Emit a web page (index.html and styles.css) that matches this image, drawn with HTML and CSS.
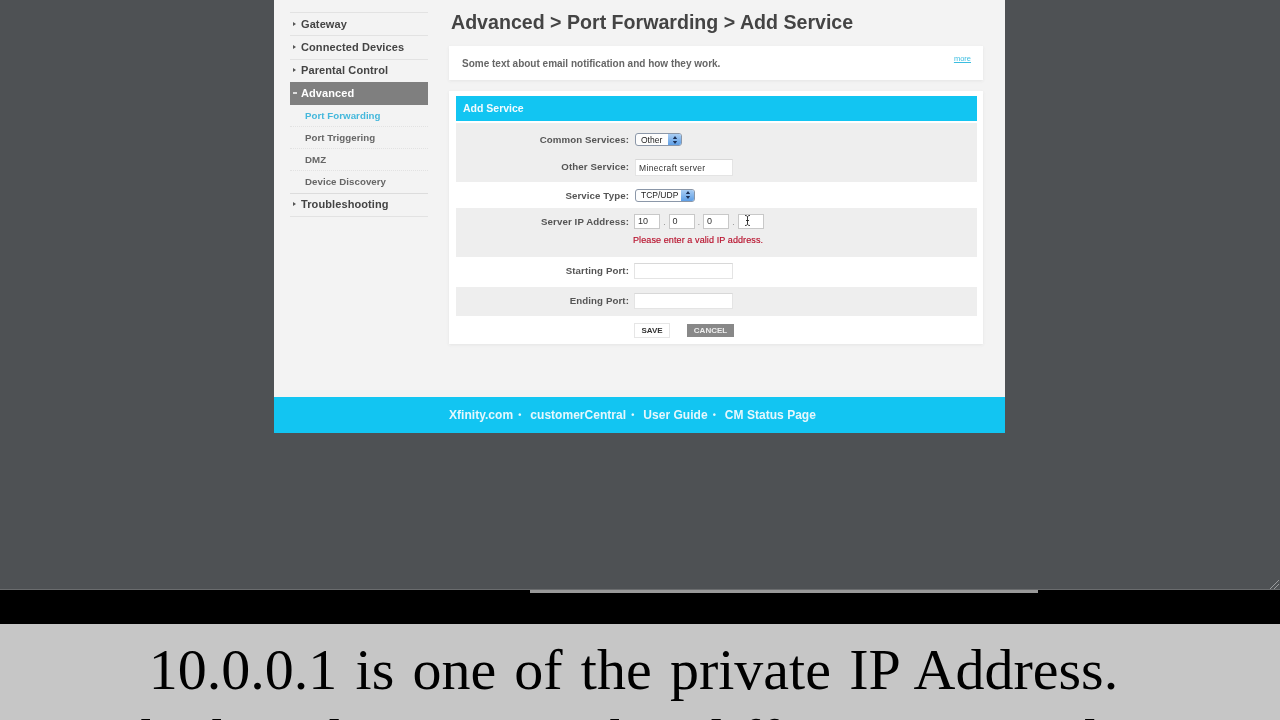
FILE: index.html
```html
<!DOCTYPE html>
<html lang="en">
<head>
<meta charset="utf-8">
<title>Add Service</title>
<link rel="stylesheet" href="styles.css">
</head>
<body>
<div class="screen">
  <div class="desktop">
    <div class="panel">
      <div class="panel-body">
        <nav class="side">
          <a class="nav"><i class="tri"></i>Gateway</a>
          <a class="nav"><i class="tri"></i>Connected Devices</a>
          <a class="nav"><i class="tri"></i>Parental Control</a>
          <a class="nav active"><i class="tri down"></i>Advanced</a>
          <a class="sub current">Port Forwarding</a>
          <a class="sub">Port Triggering</a>
          <a class="sub">DMZ</a>
          <a class="sub">Device Discovery</a>
          <a class="nav trouble"><i class="tri"></i>Troubleshooting</a>
        </nav>
        <main class="main">
          <h1 class="title">Advanced &gt; Port Forwarding &gt; Add Service</h1>
          <div class="info">
            <span>Some text about email notification and how they work.</span>
            <a class="more">more</a>
          </div>
          <section class="card">
            <h2 class="card-head">Add Service</h2>
            <div class="band shade first">
              <div class="row r1">
                <label>Common Services:</label>
                <span class="select s-other">Other<b class="stepper"><svg viewBox="0 0 8 10" width="8" height="10"><path d="M4 1 6.2 4H1.8zM4 9 1.8 6h4.400z" fill="#1b2f55"/></svg></b></span>
              </div>
              <div class="row r2 lift">
                <label>Other Service:</label>
                <span class="input wide">Minecraft server</span>
              </div>
            </div>
            <div class="band type">
              <div class="row">
                <label>Service Type:</label>
                <span class="select s-tcp">TCP/UDP<b class="stepper"><svg viewBox="0 0 8 10" width="8" height="10"><path d="M4 1 6.2 4H1.8zM4 9 1.8 6h4.400z" fill="#1b2f55"/></svg></b></span>
              </div>
            </div>
            <div class="band shade ip">
              <div class="row lift">
                <label>Server IP Address:</label>
                <div class="octets">
                  <span class="input oct">10</span><em>.</em>
                  <span class="input oct">0</span><em>.</em>
                  <span class="input oct">0</span><em>.</em>
                  <span class="input oct last"><svg class="cursor" viewBox="0 0 7 11" width="7" height="11"><path d="M1 .5c1.500 0 2 .5 2.500 1 .5-.5 1-1 2.500-1M3.500 1.500v8M1 10.500c1.500 0 2-.5 2.500-1 .5.5 1 1 2.500 1M2 5.500h3" fill="none" stroke="#222" stroke-width=".9"/></svg></span>
                </div>
              </div>
              <p class="error">Please enter a valid IP address.</p>
            </div>
            <div class="band port">
              <div class="row lift">
                <label>Starting Port:</label>
                <span class="input port-in"></span>
              </div>
            </div>
            <div class="band shade port">
              <div class="row">
                <label>Ending Port:</label>
                <span class="input port-in"></span>
              </div>
            </div>
            <div class="actions">
              <a class="btn save">SAVE</a>
              <a class="btn cancel">CANCEL</a>
            </div>
          </section>
        </main>
      </div>
      <footer class="foot">
        <a>Xfinity.com</a><i>•</i><a>customerCentral</a><i>•</i><a>User Guide</a><i>•</i><a>CM Status Page</a>
      </footer>
    </div>
    <svg class="grip" viewBox="0 0 10 10" width="10" height="10"><path d="M1 10 10 1M5 10l5-5" stroke="#9a9c9e" fill="none"/></svg>
  </div>
  <div class="strip"><div class="scroll"></div></div>
  <div class="caption">10.0.0.1 is one of the private IP Address.<br>which end users use this different one and so</div>
</div>
</body>
</html>
```
FILE: styles.css
```css
* { box-sizing: border-box; }
html, body { margin: 0; height: 100%; overflow: hidden; }
body { font-family: "Liberation Sans", Arial, sans-serif; background: #000; }
.screen { width: 1280px; height: 720px; display: flex; flex-direction: column; overflow: hidden; }

.desktop { position: relative; height: 590px; background: #4e5154; display: flex; justify-content: center; border-bottom: 1px solid #6a6c6e; }
.panel { width: 731px; height: 433px; margin-right: 1px; background: #f3f3f3; display: flex; flex-direction: column; filter: blur(.35px); }
.panel-body { flex: 1; display: flex; padding: 0 21px 0 16px; }
.grip { position: absolute; right: 1px; bottom: 0; }

.side { width: 138px; padding-top: 12px; flex: none; }
.nav { display: flex; align-items: center; height: 23.3px; padding-bottom: 1px; border-top: 1px solid #e2e2e2; font-size: 11px; font-weight: bold; color: #444; letter-spacing: .1px; }
.tri { width: 0; height: 0; margin: 0 5px 0 3px; border-left: 3px solid #555; border-top: 2.5px solid transparent; border-bottom: 2.5px solid transparent; }
.tri.down { margin: 0 4px 0 3px; border: 0; width: 4px; height: 1.500px; background: #ddd; }
.nav.active { background: #7f7f7f; color: #fff; border-top: 0; }
.sub { display: block; height: 22px; padding-left: 15px; font-size: 9.700px; font-weight: bold; line-height: 21px; color: #666; letter-spacing: .05px; border-bottom: 1px dotted #e2e2e2; }
.sub.current { color: #45b8dc; }
.sub:nth-child(8) { border-bottom: 0; }
.nav.trouble { padding-bottom: 2px; border-top: 1px solid #dcdcdc; border-bottom: 1px solid #e2e2e2; height: 24px; }

.main { width: 534px; margin-left: 21px; }
.title { margin: 0; height: 46px; padding: 11px 0 0 2px; font-size: 19.600px; line-height: 22px; font-weight: bold; color: #444; white-space: nowrap; }
.info { height: 34px; background: #fff; box-shadow: 0 1px 3px #e4e4e4; display: flex; justify-content: space-between; padding: 11px 12px 0 13px; font-size: 10px; font-weight: bold; color: #666; line-height: 13px; }
.more { margin-top: -3px; font-size: 7.500px; font-weight: normal; line-height: 10px; color: #3bbde0; text-decoration: underline; }

.card { margin-top: 11px; height: 253px; background: #fff; box-shadow: 0 1px 3px #e4e4e4; padding: 5px 6px 0 7px; }
.card-head { margin: 0 0 2px; height: 25px; padding-left: 7px; background: #12c5f2; color: #f2fbfe; font-size: 10.500px; line-height: 24px; font-weight: bold; }
.band { width: 100%; }
.shade { background: #eeeeee; }
.first { height: 59px; padding-top: 10px; }
.type { height: 26px; padding-top: 5px; }
.ip { height: 49px; padding-top: 6px; }
.port { height: 29.500px; padding-top: 6px; }
.row { display: flex; align-items: center; height: 16px; }
.r1 { height: 13px; }
.r2 { margin-top: 13px; height: 17px; }
.row label { width: 173px; margin-right: 5px; text-align: right; font-size: 9.700px; font-weight: bold; color: #555; white-space: nowrap; flex: none; letter-spacing: .1px; }
.lift label { margin-bottom: 2px; }

.select { display: flex; align-items: center; justify-content: space-between; height: 13px; padding-left: 5px; margin-left: 1px; font-size: 8.500px; color: #222; background: #fdfdfd; border: 1px solid #8b97a8; border-radius: 3px; overflow: hidden; }
.s-other { width: 47px; }
.s-tcp { width: 60px; }
.stepper { display: flex; align-items: center; justify-content: center; width: 13px; height: 100%; background: linear-gradient(#a9cdf3, #5f9fe6); }
.input { display: block; background: #fff; border: 1px solid #e4e4e4; border-top-color: #d8d8d8; font-size: 8.500px; color: #333; flex: none; }
.wide { width: 98px; height: 17px; margin-left: 1px; line-height: 16px; padding-left: 3px; letter-spacing: .35px; }
.octets { display: flex; align-items: flex-start; height: 15px; margin-top: -1px; }
.oct { position: relative; width: 26px; height: 15px; padding-left: 3px; line-height: 13px; font-size: 9px; border-color: #c8c8c8; }
.octets em { width: 8.500px; font-style: normal; font-size: 8px; text-align: center; line-height: 18px; color: #666; }
.cursor { position: absolute; left: 5px; top: 0; }
.error { margin: 4px 0 0 177px; font-size: 9px; line-height: 12px; font-weight: normal; color: #b8102c; -webkit-text-stroke: .15px #b8102c; letter-spacing: .1px; }
.port-in { width: 99px; height: 16px; }

.actions { display: flex; align-items: center; height: 28px; padding-left: 178px; }
.btn { display: block; text-align: center; font-weight: bold; font-size: 8px; }
.save { width: 36px; height: 15px; line-height: 13px; border: 1px solid #e6e6e6; color: #333; background: #fff; }
.cancel { width: 47px; height: 13px; line-height: 13px; margin-left: 17px; background: #888; color: #eee; }

.foot { flex: none; height: 36px; padding: 0 0 1px 175px; background: #12c5f2; display: flex; align-items: center; font-size: 12px; font-weight: bold; letter-spacing: .03px; color: #e6f7fc; white-space: nowrap; }
.foot i { font-style: normal; margin: 0 9px 0 5px; font-size: 9px; }

.strip { height: 34px; background: #000; flex: none; }
.scroll { width: 508px; height: 3px; margin-left: 530px; background: #999; }
.caption { flex: none; height: 96px; padding: 11px 13px 0 0; background: #c6c6c6; color: #000; text-align: center; font-family: "Liberation Serif", "Times New Roman", serif; font-size: 58px; line-height: 70px; word-spacing: 3.700px; white-space: nowrap; overflow: hidden; }
```
